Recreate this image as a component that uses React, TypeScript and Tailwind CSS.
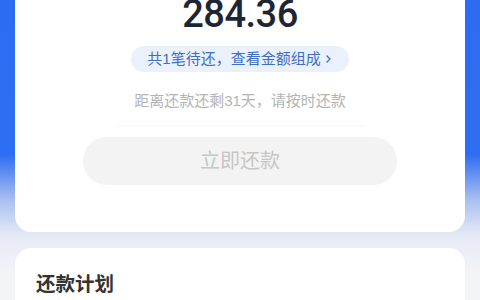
export default function App() {
  return (
    <div className="w-[480px] h-[300px] overflow-hidden bg-[linear-gradient(180deg,#2d6cf2_0px,#2f6df2_155px,#a9c0f0_200px,#e6eaf5_236px,#f3f4f8_275px)] font-['Liberation_Sans','Noto_Sans_CJK_SC',sans-serif]">
      {/* 待还金额卡片 */}
      <div className="mx-[15px] -mt-[5px] bg-white rounded-b-[16px] flex flex-col items-center pb-[47px]">
        <div className="font-['Roboto',sans-serif] font-medium text-[38px] leading-[38px] text-[#1f2633] tracking-[-0.5px]">284.36</div>
        <div className="mt-[13px] h-[26px] px-[16px] rounded-full bg-[#eaf1fc] flex items-center text-[15px] text-[#3f6dc4]">
          共1笔待还，查看金额组成
          <svg width="9" height="10" viewBox="0 0 9 10" className="ml-[3px]">
            <path d="M3 2 L6 5 L3 8" fill="none" stroke="#3f6dc4" strokeWidth="1.4" strokeLinecap="round" strokeLinejoin="round" />
          </svg>
        </div>
        <div className="mt-[21px] text-[15px] leading-[16px] text-[#b4b4b4]">距离还款还剩31天，请按时还款</div>
        <div className="mt-[16px] w-[247px] h-px bg-[#f6f6f6]" />
        <button className="mt-[11px] w-[314px] h-[48px] rounded-full bg-[#f3f3f3] text-[20px] text-[#c6c6c6]">
          立即还款
        </button>
      </div>

      {/* 还款计划 */}
      <div className="mx-[15px] mt-[16px] bg-white rounded-t-[16px] h-[80px] px-[21px] pt-[25px]">
        <div className="text-[19.5px] font-bold text-[#333333] leading-[22px]">还款计划</div>
      </div>
    </div>
  )
}
